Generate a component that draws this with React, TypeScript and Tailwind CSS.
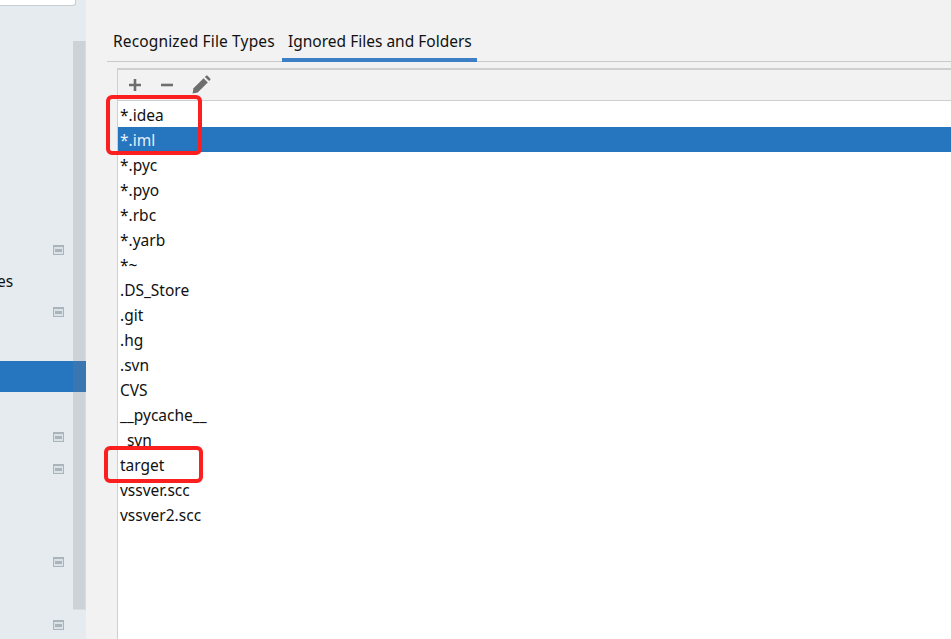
const files = [
  "*.idea",
  "*.iml",
  "*.pyc",
  "*.pyo",
  "*.rbc",
  "*.yarb",
  "*~",
  ".DS_Store",
  ".git",
  ".hg",
  ".svn",
  "CVS",
  "__pycache__",
  "_svn",
  "target",
  "vssver.scc",
  "vssver2.scc",
];

// sidebar tree rows, only the parts still visible in the crop
const treeRows: { icon?: boolean; text?: string; selected?: boolean }[] = [
  {}, {}, {}, {}, {}, {}, {},
  { icon: true },
  { text: "es" },
  { icon: true },
  {},
  { selected: true },
  {},
  { icon: true },
  { icon: true },
  {}, {},
  { icon: true },
  {},
  { icon: true },
];

function SettingsIcon() {
  return (
    <div className="w-[11px] h-[10px] ml-[53px] mt-[9px] bg-[#aab4bb] flex flex-col justify-end p-px">
      <div className="h-[7px] bg-[#dbe2e7] flex items-center justify-center">
        <div className="w-[7px] h-[3px] bg-[#aab4bb]" />
      </div>
    </div>
  );
}

function Sidebar() {
  return (
    <aside className="relative w-[86px] shrink-0 h-full bg-[#e6ebef] overflow-hidden">
      <div className="w-[76px] h-[6px] bg-white border-r border-b border-[#c9cdd0] rounded-br-[3px]" />
      {/* scrollbar thumb */}
      <div className="absolute left-[73px] top-[41px] w-[13px] h-[569px] bg-[#cdd2d7] border-r border-b border-[#d9dde0]" />
      <div className="pt-[11px] flex flex-col">
        {treeRows.map((row, i) => (
          <div key={i} className="h-[31.25px] shrink-0">
            {row.icon && <SettingsIcon />}
            {row.text && <div className="pt-[5px] -ml-[3px] leading-[18px]">{row.text}</div>}
            {row.selected && (
              <div className="relative z-10 h-[31px] bg-[#2675bf] flex justify-end">
                <div className="w-[13px] h-full bg-[#3a77b2]" />
              </div>
            )}
          </div>
        ))}
      </div>
    </aside>
  );
}

export default function App() {
  return (
    <div
      className="relative w-[951px] h-[639px] overflow-hidden flex bg-[#f2f2f2] text-[15.5px] text-[#111]"
      style={{ fontFamily: '"Noto Sans", "Open Sans", sans-serif' }}
    >
      <Sidebar />

      <main className="flex-1 min-w-0 h-full pl-[21px] flex flex-col">
        {/* tabs */}
        <div className="h-[62px] shrink-0 pt-[28px] border-b border-[#c9c9c9] flex gap-[4px]">
          <div className="w-[171px] px-[6px] leading-[26px] h-[33px] whitespace-nowrap tracking-[0.15px]">Recognized File Types</div>
          <div className="w-[195px] px-[6px] leading-[26px] h-[34px] whitespace-nowrap border-b-4 border-[#3d7fc4]">
            Ignored Files and Folders
          </div>
        </div>

        {/* list panel */}
        <div className="flex-1 min-h-0 ml-[10px] mt-[6px] bg-white border-l border-t-2 border-[#cfcfcf] flex flex-col">
          <div className="h-[31px] shrink-0 bg-[#f2f2f2] border-b border-[#cfcfcf] flex items-center gap-[18px] pl-[10px] text-[#6e6e6e]">
            <svg width="14" height="14" viewBox="0 0 14 14">
              <path d="M7 1v12M1 7h12" fill="none" stroke="currentColor" strokeWidth="2.6" />
            </svg>
            <svg width="14" height="14" viewBox="0 0 14 14">
              <path d="M1 7h12" fill="none" stroke="currentColor" strokeWidth="2.6" />
            </svg>
            <svg width="20" height="20" viewBox="0 0 20 20" className="-ml-[1px]">
              <path fill="currentColor" d="M1.5 18.5l1-5.2L12.6 3.2l4.2 4.2L6.7 17.5z" />
              <path fill="currentColor" d="M13.9 1.9l1.2-1.1c.4-.4 1-.4 1.4 0l2.7 2.7c.4.4.4 1 0 1.4l-1.1 1.2z" />
            </svg>
          </div>
          <ul className="pt-px">
            {files.map((f) => (
              <li
                key={f}
                className={
                  "h-[25px] leading-[27px] pl-[2px] whitespace-nowrap " +
                  (f === "*.iml" ? "bg-[#2675bf] text-[#e8f0f8]" : "")
                }
              >
                {f}
              </li>
            ))}
          </ul>
        </div>
      </main>

      {/* red annotation boxes */}
      <div className="absolute left-[106px] top-[95px] w-[96px] h-[60px] border-4 border-[#fb1f1f] rounded-[6px]" />
      <div className="absolute left-[104px] top-[446px] w-[99px] h-[37px] border-4 border-[#fb1f1f] rounded-[6px]" />
    </div>
  );
}
